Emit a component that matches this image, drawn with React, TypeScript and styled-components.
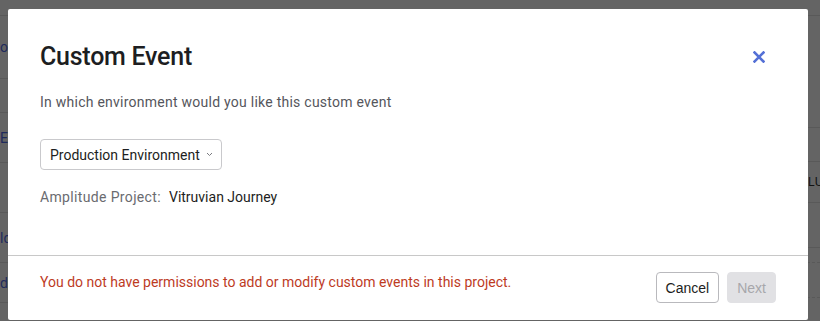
import React from "react";
import styled, { createGlobalStyle } from "styled-components";

const GlobalStyle = createGlobalStyle`
  html, body {
    margin: 0;
    padding: 0;
    background: #646464;
  }
  body {
    font-family: "Roboto", "Noto Sans", sans-serif;
    -webkit-font-smoothing: antialiased;
  }
`;

type RowProps = {
  height: number;
  dashed?: boolean;
};

type ButtonProps = {
  disabled?: boolean;
};

const leftRows = [
  { height: 16, label: "" },
  { height: 63, label: "ou" },
  { height: 34, label: "" },
  { height: 50, label: "EV" },
  { height: 50, label: "" },
  { height: 50, label: "ld" },
  { height: 40, label: "dd" },
];

const rightRows = [
  { height: 16, label: "" },
  { height: 112, label: "" },
  { height: 34, label: "" },
  { height: 41, label: "LU" },
  { height: 45, label: "" },
  { height: 15, label: "", dashed: true },
  { height: 35, label: "", dashed: true },
];

const Page = styled.div`
  position: relative;
  height: 321px;
  overflow: hidden;
  display: flex;
  justify-content: space-between;
`;

const Column = styled.div`
  display: flex;
  flex-direction: column;
  width: 200px;
`;

const BgRow = styled.div<RowProps>`
  height: ${(props) => props.height}px;
  box-sizing: border-box;
  border-bottom: 1px ${(props) => (props.dashed ? "dashed" : "solid")} #595959;
  display: flex;
  align-items: center;
  font-size: 14px;
`;

const LeftLabel = styled.span`
  color: #1f2a5c;
  white-space: nowrap;
`;

const RightLabel = styled.span`
  color: #111;
  margin-left: auto;
  margin-right: -1px;
  font-family: "Liberation Sans", Arial, sans-serif;
  font-size: 12px;
  width: 13px;
  overflow: hidden;
`;

const Modal = styled.div`
  position: absolute;
  left: 8px;
  top: 9px;
  width: 800px;
  height: 311px;
  background: #ffffff;
  border-radius: 2px;
  display: flex;
  flex-direction: column;
`;

const Body = styled.div`
  flex: 1;
  padding: 32px 43px 0 32px;
  display: flex;
  flex-direction: column;
  align-items: flex-start;
`;

const Header = styled.div`
  align-self: stretch;
  display: flex;
  justify-content: space-between;
  align-items: center;
`;

const Title = styled.h2`
  margin: 0;
  font-size: 25px;
  line-height: 32px;
  font-weight: 500;
  letter-spacing: -0.25px;
  color: #1d1e22;
`;

const CloseButton = styled.button`
  border: none;
  background: none;
  padding: 0;
  width: 12px;
  height: 12px;
  display: flex;
  cursor: pointer;
`;

const Subtitle = styled.p`
  margin: 19px 0 0;
  font-size: 14px;
  line-height: 20px;
  letter-spacing: 0.25px;
  color: #55565c;
`;

const Select = styled.button`
  margin-top: 27px;
  height: 31px;
  box-sizing: border-box;
  display: flex;
  align-items: center;
  gap: 6px;
  padding: 0 8px 0 9px;
  background: #fff;
  border: 1px solid #c9c9cc;
  border-radius: 4px;
  font-family: inherit;
  font-size: 14px;
  color: #1d1e22;
`;

const ProjectRow = styled.div`
  margin-top: 17px;
  display: flex;
  gap: 8px;
  font-size: 14px;
  line-height: 20px;
`;

const ProjectLabel = styled.span`
  color: #6a6b70;
  letter-spacing: 0.35px;
`;

const ProjectName = styled.span`
  color: #1d1e22;
`;

const Footer = styled.div`
  border-top: 1px solid #c8c8c8;
  height: 65px;
  box-sizing: border-box;
  padding: 16px 32px 0;
  display: flex;
  justify-content: space-between;
  align-items: flex-start;
`;

const ErrorText = styled.p`
  margin: 0;
  font-size: 14px;
  line-height: 20px;
  color: #bd3b1f;
`;

const Actions = styled.div`
  display: flex;
  gap: 8px;
`;

const Button = styled.button<ButtonProps>`
  height: 31px;
  padding: 0 9px;
  border-radius: 4px;
  font-family: "Liberation Sans", Arial, sans-serif;
  font-size: 14px;
  border: 1px solid ${(props) => (props.disabled ? "#e1e1e4" : "#b9b9bd")};
  background: ${(props) => (props.disabled ? "#e1e1e4" : "#ffffff")};
  color: ${(props) => (props.disabled ? "#a7a7ab" : "#1d1e22")};
`;

const Chevron = () => (
  <svg width="7" height="5" viewBox="0 0 7 5" fill="none">
    <path d="M1 1l2.5 2.5L6 1" stroke="#7a7b80" strokeWidth="1" />
  </svg>
);

const CloseIcon = () => (
  <svg width="12" height="12" viewBox="0 0 12 12" fill="none">
    <path
      d="M1.5 1.5l9 9M10.5 1.5l-9 9"
      stroke="#5470d6"
      strokeWidth="2.6"
      strokeLinecap="square"
    />
  </svg>
);

export default function App() {
  return (
    <>
      <GlobalStyle />
      <Page>
        <Column>
          {leftRows.map((row, i) => (
            <BgRow key={i} height={row.height}>
              {row.label && <LeftLabel>{row.label}</LeftLabel>}
            </BgRow>
          ))}
        </Column>
        <Column>
          {rightRows.map((row, i) => (
            <BgRow key={i} height={row.height} dashed={row.dashed}>
              {row.label && <RightLabel>{row.label}</RightLabel>}
            </BgRow>
          ))}
        </Column>
        <Modal>
          <Body>
            <Header>
              <Title>Custom Event</Title>
              <CloseButton aria-label="Close">
                <CloseIcon />
              </CloseButton>
            </Header>
            <Subtitle>In which environment would you like this custom event</Subtitle>
            <Select>
              Production Environment
              <Chevron />
            </Select>
            <ProjectRow>
              <ProjectLabel>Amplitude Project:</ProjectLabel>
              <ProjectName>Vitruvian Journey</ProjectName>
            </ProjectRow>
          </Body>
          <Footer>
            <ErrorText>
              You do not have permissions to add or modify custom events in this project.
            </ErrorText>
            <Actions>
              <Button>Cancel</Button>
              <Button disabled>Next</Button>
            </Actions>
          </Footer>
        </Modal>
      </Page>
    </>
  );
}
